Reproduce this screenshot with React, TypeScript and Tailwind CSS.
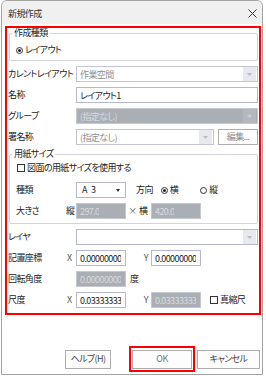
import React from "react";

type Tone = "white" | "gray" | "readonly";

function Arrow({ gray }: { gray?: boolean }) {
  return (
    <div
      className={`ml-auto flex h-full w-[13px] shrink-0 items-center justify-center ${
        gray ? "bg-[#b4b8be]" : "bg-[#e8e9ef]"
      }`}
    >
      <svg width="5" height="3" viewBox="0 0 5 3">
        <path d="M0 0H5L2.5 3Z" fill={gray ? "#d0d3d8" : "#b8bac4"} />
      </svg>
    </div>
  );
}

function Field({
  w,
  value,
  tone = "white",
  arrow,
}: {
  w: string;
  value?: string;
  tone?: Tone;
  arrow?: boolean;
}) {
  const box =
    tone === "gray"
      ? "bg-[#aaaeb5] border-[#c6c8cc] text-[#d9dbde]"
      : tone === "readonly"
        ? "bg-white border-[#c3c3d3] text-[#8e8e8e]"
        : "bg-white border-[#b7b7cd] text-[#222]";
  return (
    <div
      className={`${w} ${box} flex h-[16px] shrink-0 items-center overflow-hidden whitespace-nowrap border pl-[3px] pr-[1px]`}
    >
      <span className="overflow-hidden leading-[13px]">{value}</span>
      {arrow && <Arrow gray={tone === "gray"} />}
    </div>
  );
}

function Radio({ checked }: { checked?: boolean }) {
  return (
    <span className="flex h-[7px] w-[7px] shrink-0 items-center justify-center rounded-full border border-[#333] bg-white">
      {checked && <span className="h-[3px] w-[3px] rounded-full bg-[#222]" />}
    </span>
  );
}

function Check() {
  return <span className="block h-[8px] w-[8px] shrink-0 border border-[#333] bg-white" />;
}

function Row({ label, children }: { label: string; children: React.ReactNode }) {
  return (
    <div className="flex h-[16px] items-center">
      <span className="w-[69px] shrink-0 whitespace-nowrap pl-[1px]">{label}</span>
      {children}
    </div>
  );
}

function Group({
  title,
  className,
  children,
}: {
  title: string;
  className?: string;
  children: React.ReactNode;
}) {
  return (
    <fieldset
      className={`ml-[2px] w-[249px] rounded-[2px] border border-[#d3d3e0] ${className ?? ""}`}
    >
      <legend className="ml-[2px] px-[2px] leading-[12px]">{title}</legend>
      {children}
    </fieldset>
  );
}

function Button({ label, w, muted }: { label: string; w: string; muted?: boolean }) {
  return (
    <div
      className={`${w} flex h-[19px] items-center justify-center whitespace-nowrap border border-[#adadad] bg-[#fdfdfd] ${
        muted ? "text-[#777]" : "text-[#444]"
      }`}
    >
      {label}
    </div>
  );
}

export default function App() {
  return (
    <div className="h-[376px] w-[266px] bg-white font-['Noto_Sans_CJK_JP',sans-serif] text-[9px] tracking-[-0.6px] text-[#222] [font-feature-settings:'palt']">
      <div className="ml-[1px] flex h-[375px] w-[262px] flex-col rounded-t-[6px] border border-[#a3a3a3] bg-white">
        {/* title bar */}
        <div className="flex h-[23px] items-center rounded-t-[6px] bg-[#f0f0f0] pl-[6px] pr-[5px] pt-[2px] text-[#333]">
          <span>新規作成</span>
          <svg className="ml-auto" width="9" height="9" viewBox="0 0 9 9">
            <path d="M0.5 0.5L8.5 8.5M8.5 0.5L0.5 8.5" stroke="#333" strokeWidth="1" />
          </svg>
        </div>

        {/* form */}
        <div className="ml-[3px] mt-[2px] flex h-[289px] w-[256px] flex-col border-2 border-[#ff0000]">
          <Group title="作成種類" className="-mt-[1px] pb-[4px]">
            <div className="mt-[5px] flex h-[12px] items-center gap-[2px] pl-[6px]">
              <Radio checked />
              <span>レイアウト</span>
            </div>
          </Group>

          <div className="mt-[5px] flex flex-col gap-[5px]">
            <Row label="カレントレイアウト">
              <Field w="w-[182px]" value="作業空間" tone="readonly" arrow />
            </Row>
            <Row label="名称">
              <Field w="w-[182px]" value="レイアウト1" />
            </Row>
            <Row label="グループ">
              <Field w="w-[182px]" value="(指定なし)" tone="gray" arrow />
            </Row>
            <Row label="署名称">
              <Field w="w-[138px]" value="(指定なし)" tone="readonly" arrow />
              <div className="ml-[4px] flex h-[16px] w-[40px] items-center justify-center border border-[#adadad] bg-white text-[#8a8a8a]">
                編集...
              </div>
            </Row>
          </div>

          <Group title="用紙サイズ" className="mt-[3px] pb-[4px]">
            <div className="mt-[2px] flex h-[12px] items-center gap-[2px] pl-[7px]">
              <Check />
              <span className="whitespace-nowrap">図面の用紙サイズを使用する</span>
            </div>
            <div className="mt-[8px] flex h-[16px] items-center">
              <span className="w-[66px] shrink-0 pl-[6px]">種類</span>
              <div className="flex h-[16px] w-[50px] items-center border border-[#b7b7cd] bg-white pl-[5px] pr-[5px]">
                <span className="flex gap-[4px]">
                  <span>A</span>
                  <span>3</span>
                </span>
                <svg className="ml-auto" width="4" height="3" viewBox="0 0 4 3">
                  <path d="M0 0H4L2 3Z" fill="#333" />
                </svg>
              </div>
              <span className="ml-[10px]">方向</span>
              <span className="ml-[8px] flex items-center gap-[2px]">
                <Radio checked />
                <span>横</span>
              </span>
              <span className="ml-[22px] flex items-center gap-[2px]">
                <Radio />
                <span>縦</span>
              </span>
            </div>
            <div className="mt-[5px] flex h-[16px] items-center">
              <span className="w-[56px] shrink-0 pl-[6px]">大きさ</span>
              <span className="w-[10px] shrink-0">縦</span>
              <Field w="w-[50px]" value="297.0" tone="gray" />
              <span className="w-[13px] text-center text-[#555]">×</span>
              <span className="w-[12px]">横</span>
              <Field w="w-[50px]" value="420.0" tone="gray" />
            </div>
          </Group>

          <div className="mt-[5px] flex flex-col gap-[5px]">
            <Row label="レイヤ">
              <Field w="w-[182px]" arrow />
            </Row>
            <div className="flex h-[16px] items-center">
              <span className="w-[60px] shrink-0 pl-[1px]">記置座標</span>
              <span className="w-[9px] shrink-0 text-[#555]">X</span>
              <Field w="w-[50px]" value="0.00000000" />
              <span className="w-[25px] shrink-0 pr-[3px] text-right text-[#555]">Y</span>
              <Field w="w-[50px]" value="0.00000000" />
            </div>
            <div className="flex h-[16px] items-center">
              <span className="w-[69px] shrink-0 pl-[1px]">回転角度</span>
              <Field w="w-[50px]" value="0.00000000" tone="gray" />
              <span className="ml-[4px]">度</span>
            </div>
            <div className="flex h-[16px] items-center">
              <span className="w-[60px] shrink-0 pl-[1px]">尺度</span>
              <span className="w-[9px] shrink-0 text-[#555]">X</span>
              <Field w="w-[50px]" value="0.03333333" />
              <span className="w-[25px] shrink-0 pr-[3px] text-right text-[#555]">Y</span>
              <Field w="w-[50px]" value="0.03333333" tone="gray" />
              <span className="ml-[9px] flex items-center gap-[2px]">
                <Check />
                <span className="whitespace-nowrap">真縮尺</span>
              </span>
            </div>
          </div>
        </div>

        {/* buttons */}
        <div className="mt-[31px] flex items-center pl-[63px]">
          <Button label="ヘルプ(H)" w="w-[46px]" />
          <div className="ml-[18px] flex h-[26px] w-[66px] items-center justify-center border-2 border-[#ff0000]">
            <Button label="OK" w="w-[60px]" muted />
          </div>
          <div className="ml-[2px]">
            <Button label="キャンセル" w="w-[63px]" />
          </div>
        </div>
      </div>
    </div>
  );
}
